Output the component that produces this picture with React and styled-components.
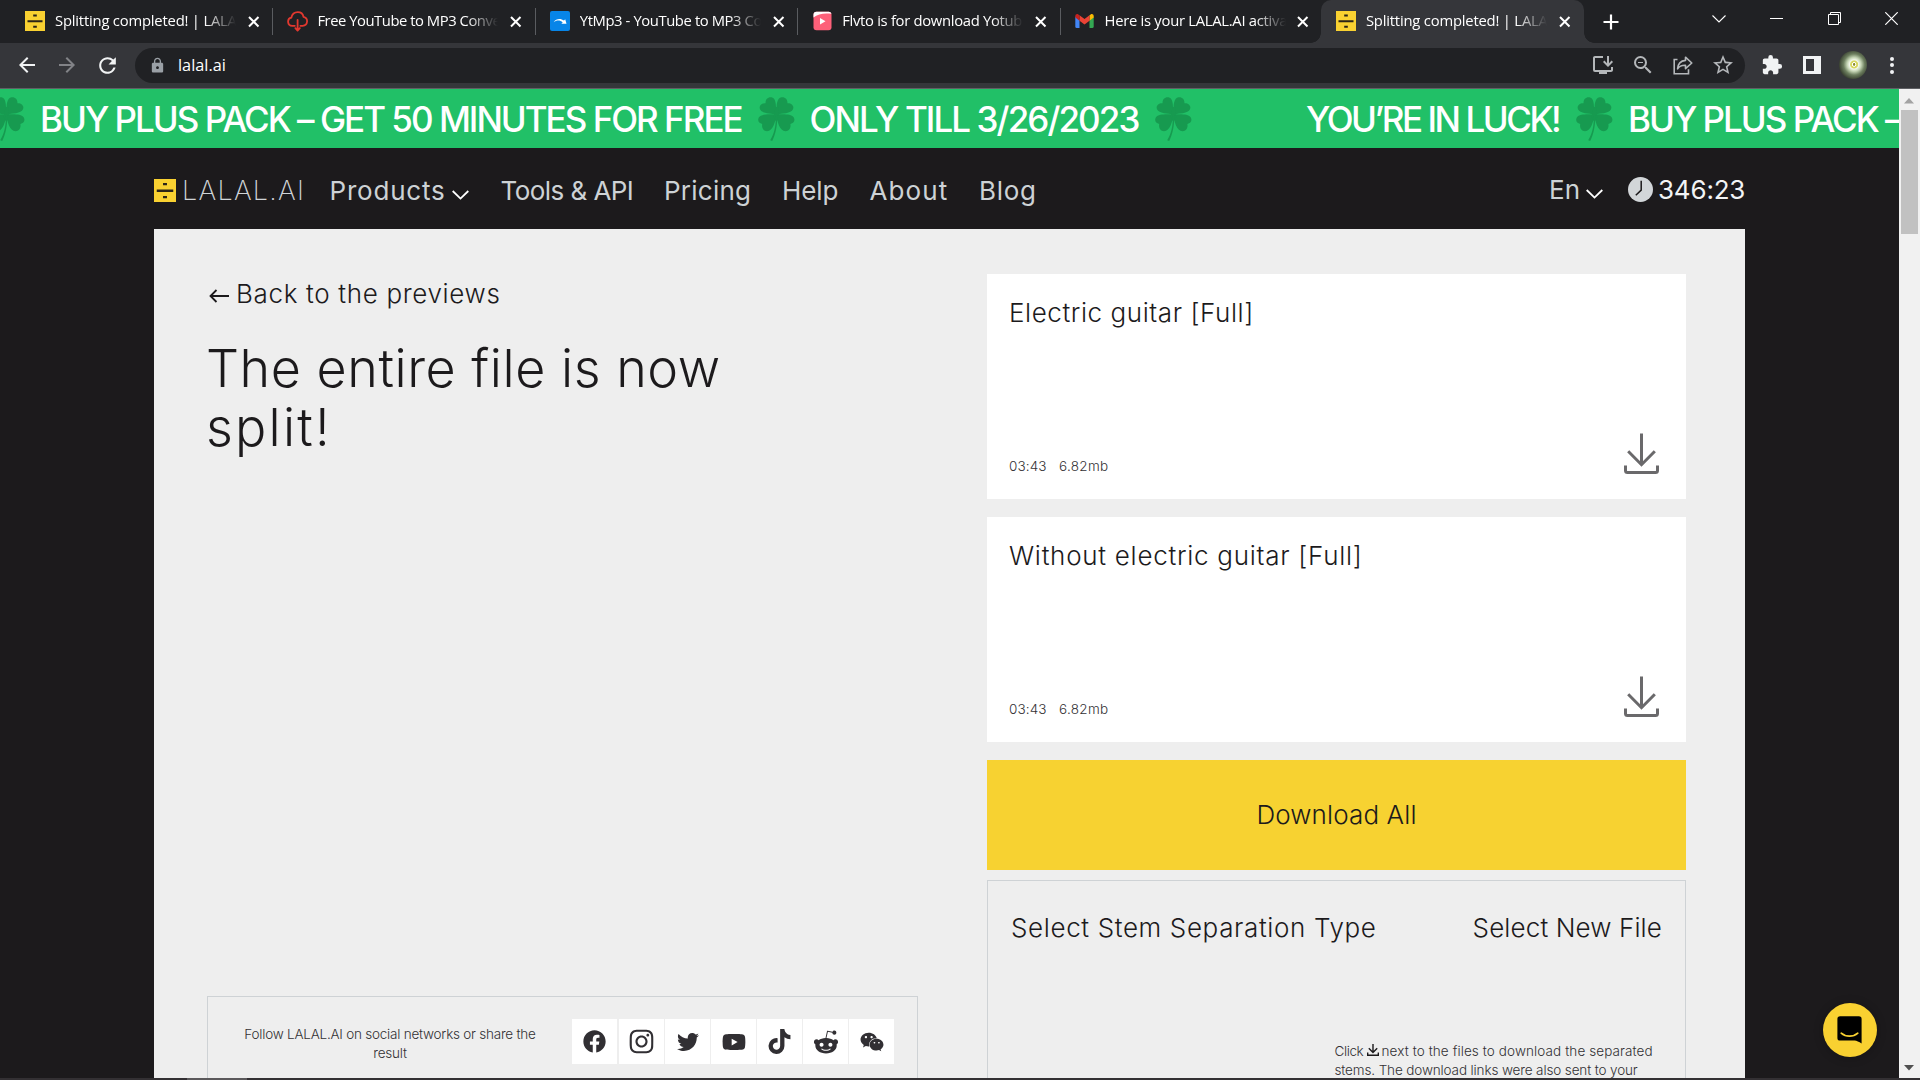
import React from "react";
import styled, { createGlobalStyle, css } from "styled-components";
import {
  MdArrowBack,
  MdArrowForward,
  MdRefresh,
  MdLock,
  MdZoomOut,
  MdStarBorder,
  MdExtension,
  MdInstallDesktop,
} from "react-icons/md";
import {
  FaFacebook,
  FaInstagram,
  FaTwitter,
  FaYoutube,
  FaTiktok,
  FaRedditAlien,
  FaWeixin,
} from "react-icons/fa";

const GlobalStyle = createGlobalStyle`
  * { box-sizing: border-box; }
  html, body { margin: 0; padding: 0; overflow: hidden; background: #1c1a1c; }
  body { font-family: Inter, "Liberation Sans", sans-serif; }
  svg { display: block; flex: none; }
`;

const Screen = styled.div`
  width: 1920px;
  height: 1080px;
  overflow: hidden;
  display: flex;
  flex-direction: column;
`;

/* ---------- browser chrome ---------- */

const TabStrip = styled.div`
  flex: none;
  height: 43px;
  display: flex;
  padding-left: 11px;
  background: #202124;
`;

const Tab = styled.div`
  position: relative;
  flex: none;
  width: 262.4px;
  height: 43px;
  display: flex;
  align-items: center;
  padding-left: 14px;
  ${(p) =>
    p.$active
      ? css`
          width: 263px;
          margin-left: -2px;
          padding-left: 15px;
          background: #35363a;
          border-radius: 10px 10px 0 0;
          &::before,
          &::after {
            content: "";
            position: absolute;
            bottom: 0;
            width: 10px;
            height: 10px;
          }
          &::before {
            left: -10px;
            background: radial-gradient(circle at 0 0, transparent 9.5px, #35363a 10px);
          }
          &::after {
            right: -10px;
            background: radial-gradient(circle at 100% 0, transparent 9.5px, #35363a 10px);
          }
        `
      : css`
          border-right: 1px solid ${p.$last ? "transparent" : "#5a5c60"};
          border-image: ${p.$last
            ? "none"
            : "linear-gradient(#202124 9px, #5a5c60 9px, #5a5c60 34px, #202124 34px) 1"};
          border-left: 0;
        `}
`;

const Favicon = styled.span`
  flex: none;
  width: 20px;
  height: 20px;
  margin-top: -1px;
  display: flex;
  align-items: center;
  justify-content: center;
`;

const TabTitle = styled.span`
  flex: none;
  width: 183px;
  margin-left: 10px;
  margin-top: -4px;
  overflow: hidden;
  white-space: nowrap;
  font: 400 14.8px/22px "Open Sans", "Noto Sans", sans-serif;
  letter-spacing: ${(p) => p.$ls}px;
  color: #fff;
  mask-image: linear-gradient(90deg, #000 150px, transparent 181px);
`;

const TabClose = styled.span`
  flex: none;
  width: 12px;
  margin-left: 9.8px;
`;

const NewTab = styled.span`
  width: 16px;
  margin-left: 19px;
  display: flex;
  align-items: center;
`;

const WindowControls = styled.div`
  flex: none;
  display: flex;
  margin-left: auto;
  height: 37px;
`;

const WindowButton = styled.span`
  width: 57.3px;
  display: flex;
  align-items: center;
  justify-content: center;
`;

const Toolbar = styled.div`
  flex: none;
  height: 46px;
  display: flex;
  align-items: center;
  padding: 0 15px 1px 15px;
  background: #35363a;
  border-bottom: 1px solid #5f6064;
  color: #f1f3f4;
`;

const NavButton = styled.span`
  flex: none;
  width: 24px;
  margin-right: 16px;
  color: ${(p) => (p.$dim ? "#828387" : "#f1f3f4")};
`;

const Omnibox = styled.div`
  flex: none;
  width: 1610px;
  height: 35px;
  padding: 0 10px 0 14px;
  border-radius: 18px;
  display: flex;
  align-items: center;
  background: #202124;
  color: #9aa0a6;
`;

const Address = styled.span`
  margin-left: 12px;
  font: 400 16.3px/24px "Open Sans", "Noto Sans", sans-serif;
  color: #fff;
`;

const OmniActions = styled.span`
  margin-left: auto;
  display: flex;
  align-items: center;
  gap: 16px;
  color: #b4b7ba;
  svg { width: 24px; height: 24px; }
`;

const ToolbarActions = styled.div`
  flex: 1;
  display: flex;
  align-items: center;
  padding-left: 16px;
`;

const PanelIcon = styled.span`
  width: 18px;
  height: 18px;
  margin-left: 20px;
  border: 3px solid #f1f3f4;
  border-right-width: 7px;
`;

const Avatar = styled.span`
  width: 28px;
  height: 28px;
  margin-left: 18px;
  border-radius: 50%;
  background: radial-gradient(circle at 54% 48%, #8a8a30 0 1px, #fff 1.5px 2px, #d8d860 2.5px 3.5px, #f4f8ec 4.5px, #c4d4b4 7px, #6d7f5f 10.5px, #3a4232 15px);
`;

const Dots = styled.span`
  display: flex;
  flex-direction: column;
  gap: 2.5px;
  margin-left: 23px;
  i {
    width: 4px;
    height: 4px;
    border-radius: 50%;
    background: #f1f3f4;
  }
`;

/* ---------- page ---------- */

const Viewport = styled.div`
  flex: none;
  height: 989px;
  display: flex;
  overflow: hidden;
`;

const Page = styled.div`
  flex: none;
  width: 1899px;
  height: 989px;
  overflow: hidden;
  background: #1c1a1c;
`;

const Banner = styled.div`
  height: 59px;
  display: flex;
  align-items: center;
  overflow: hidden;
  background: #21c067;
`;

const BannerTrack = styled.div`
  display: flex;
  align-items: center;
  margin-left: -12px;
  padding-top: 1px;
`;

const BannerText = styled.span`
  flex: none;
  width: ${(p) => p.$w}px;
  margin: ${(p) => p.$m || "0"};
  font: 450 35px/50px Inter, sans-serif;
  letter-spacing: ${(p) => p.$ls}px;
  white-space: nowrap;
  color: #fff;
`;

const Header = styled.header`
  height: 81px;
  margin: 0 154px;
  padding-top: 4px;
  display: flex;
  align-items: center;
`;

const BrandName = styled.span`
  flex: none;
  width: 147.5px;
  margin-left: 6px;
  font: 250 27px/32px Inter, sans-serif;
  letter-spacing: 1.25px;
  color: #d0d4d7;
`;

const NavItem = styled.a`
  flex: none;
  width: ${(p) => p.$w}px;
  display: flex;
  align-items: center;
  font: 400 26px/32px Inter, sans-serif;
  letter-spacing: ${(p) => p.$ls}px;
  white-space: nowrap;
  color: #cdd2d5;
  svg { margin: 8px 0 0 ${(p) => p.$gap || 6}px; }
`;

const HeaderRight = styled.div`
  margin-left: auto;
  display: flex;
  align-items: center;
  height: 30px;
  margin-top: -2px;
`;

const Balance = styled.span`
  width: 87px;
  margin-left: 5px;
  font: 430 26px/32px Inter, sans-serif;
  letter-spacing: -0.2px;
  white-space: nowrap;
  color: #f2f4f5;
`;

const Main = styled.main`
  width: 1591px;
  height: 860px;
  margin-left: 154px;
  display: flex;
  justify-content: space-between;
  padding: 0 59px 0 53px;
  background: #eeeeee;
  color: #1c1a1c;
`;

const LeftColumn = styled.section`
  width: 711px;
  height: 857px;
  padding-top: 50px;
  display: flex;
  flex-direction: column;
`;

const BackLink = styled.a`
  display: flex;
  align-items: center;
  gap: 7.5px;
  padding-left: 1.5px;
  font: 340 26px/30px Inter, sans-serif;
  letter-spacing: 0.66px;
  svg { margin-top: 3px; }
`;

const Heading = styled.h1`
  width: 600px;
  margin: 30px 0 0 -1px;
  font: 360 52px/59px Inter, sans-serif;
  letter-spacing: 0.54px;
`;

const Wide = styled.span`
  letter-spacing: 2.2px;
`;

const ShareBox = styled.div`
  height: 90px;
  margin-top: auto;
  padding: 22px 23px 0 0;
  display: flex;
  align-items: flex-start;
  border: 1px solid #ced2d5;
`;

const ShareText = styled.p`
  flex: 1;
  margin: 0;
  padding: 6px 34px 0;
  text-align: center;
  font: 300 13.5px/19px Inter, sans-serif;
  letter-spacing: -0.23px;
  color: #333134;
`;

const Socials = styled.div`
  display: flex;
  gap: 1px;
`;

const Social = styled.a`
  width: 45px;
  height: 45px;
  display: flex;
  align-items: center;
  justify-content: center;
  background: #fff;
  color: #312f33;
  &:first-child { margin-right: 1px; }
  svg { width: ${(p) => p.$s || 24}px; height: ${(p) => p.$s || 24}px; }
`;

const RightColumn = styled.section`
  width: 699px;
  padding-top: 45px;
`;

const StemCard = styled.article`
  height: 225px;
  margin-bottom: 18px;
  padding: 24px 27px 25px 22px;
  display: flex;
  flex-direction: column;
  justify-content: space-between;
  background: #fff;
`;

const StemTitle = styled.h2`
  margin: 0;
  font: 340 26px/30px Inter, sans-serif;
  letter-spacing: ${(p) => p.$ls}px;
`;

const StemFooter = styled.div`
  display: flex;
  align-items: flex-end;
  svg { margin-left: auto; }
`;

const Meta = styled.span`
  width: 50px;
  font: 300 13.5px/15px Inter, sans-serif;
  letter-spacing: ${(p) => p.$ls}px;
  color: #333134;
`;

const DownloadAll = styled.button`
  display: block;
  width: 100%;
  height: 110px;
  border: 0;
  padding: 0;
  background: #f7d231;
  font: 340 26px/30px Inter, sans-serif;
  letter-spacing: 0.12px;
  color: #1c1a1c;
`;

const SelectBox = styled.div`
  height: 240px;
  margin-top: 10px;
  padding: 32px 23px 0 23px;
  border: 1px solid #ced2d5;
`;

const SelectRow = styled.div`
  display: flex;
  justify-content: space-between;
  font: 340 26px/30px Inter, sans-serif;
`;

const SelectLabel = styled.span`
  letter-spacing: ${(p) => p.$ls}px;
`;

const Note = styled.p`
  width: 327.5px;
  margin: 99px 0 0 auto;
  font: 300 13.5px/19px Inter, sans-serif;
  color: #333134;
`;

const NoteLine = styled.span`
  display: flex;
  align-items: center;
  white-space: nowrap;
  letter-spacing: ${(p) => p.$ls}px;
  svg { margin: -3px 3px 0 3px; }
`;

const Tight = styled.span`
  width: 29px;
  letter-spacing: -0.4px;
`;

const Scrollbar = styled.div`
  width: 21px;
  display: flex;
  flex-direction: column;
  align-items: center;
  background: #f1f1f1;
  padding: 9px 1px 7px 0;
`;

const Thumb = styled.div`
  width: 17px;
  height: 124px;
  margin: 6px 0 auto;
  background: #c1c1c1;
`;

const ChatBubble = styled.div`
  position: absolute;
  left: 1823px;
  top: 1003px;
  width: 54px;
  height: 54px;
  border-radius: 50%;
  display: flex;
  align-items: center;
  justify-content: center;
  padding: 0 2px 1px 0;
  background: #f9d131;
  box-shadow: 0 1px 10px rgba(0, 0, 0, 0.25);
`;

const Taskbar = styled.div`
  flex: none;
  height: 2px;
  background: linear-gradient(90deg, #333033 187px, #5b595b 187px, #5b595b 247px, #333033 247px);
`;

/* ---------- drawings ---------- */

const DrawerIcon = ({ w, h }) => (
  <svg width={w} height={h} viewBox="0 0 20 20" preserveAspectRatio="none">
    <path fill="#f9d131" d="M0 0h20v20H0z" />
    <path fill="#2b2418" d="M2.5 9.2h15v2h-15zM8.2 3.4h3.6v2H8.2zM8.2 14.8h3.6v2H8.2z" />
  </svg>
);

const CloudIcon = () => (
  <svg width="21" height="21" viewBox="0 0 21 21" fill="none" stroke="#e2382f" strokeWidth="1.8" strokeLinecap="round" strokeLinejoin="round">
    <path d="M7.8 14.8H5.2a4.1 4.1 0 0 1-.9-8.1C5 3.6 7.6 1.2 10.8 1.2c3 0 5.2 2 5.7 4.7a4.5 4.5 0 0 1-.8 8.9h-2.3M10.6 8.8v10.5M8.4 17.2l2.2 2.4 2.2-2.4" />
  </svg>
);

const YtMp3Icon = () => (
  <svg width="20" height="20" viewBox="0 0 20 20">
    <rect width="20" height="20" rx="2" fill="#0785e8" />
    <path d="M3.6 11.2C6 7.6 10.5 6.8 14 9.6l1.2-1.3 1.3 4.5h-5.2l1.4-1.4C10 8.9 6.5 9 3.6 11.2z" fill="#fff" />
  </svg>
);

const FlvtoIcon = () => (
  <svg width="19" height="20" viewBox="0 0 19 20">
    <rect x="0.5" y="0.8" width="18" height="18.4" rx="3" fill="#fd6079" />
    <path d="M0.5 6.5V3.8a3 3 0 0 1 3-3h12a3 3 0 0 1 3 2C12 1.8 5 2.5.5 6.5z" fill="#fff" />
    <path d="M7 7l5.5 3.2L7 13.4z" fill="#fff" />
  </svg>
);

const GmailIcon = () => (
  <svg width="19" height="14" viewBox="0 0 19 14">
    <path fill="#4285f4" d="M.3 2.5v10.3c0 .7.5 1.2 1.2 1.2H4.5V5.6z" />
    <path fill="#34a853" d="M14.5 14h3c.7 0 1.2-.5 1.2-1.2V2.5l-4.2 3.1z" />
    <path fill="#fbbc04" d="M14.5 1.2v5.5l4.2-3.2V2c0-1.8-1.8-2.5-3-1.6z" />
    <path fill="#ea4335" d="M4.5 6.7V1.2l5 3.7 5-3.7v5.5l-5 3.8z" />
    <path fill="#c5221f" d="M.3 2v1.5l4.2 3.2V1.2L3.3.4C2.1-.5.3.2.3 2z" />
  </svg>
);

const Cross = () => (
  <svg width="12" height="12" viewBox="0 0 12 12" stroke="#fff" strokeWidth="2">
    <path d="M1 1l9.5 9.5M10.5 1L1 10.5" />
  </svg>
);

const Clover = () => (
  <svg width="37" height="44" viewBox="0 0 37 44" fill="#179a50">
    <path d="M18.5 17.5C17.5 11 19.2 1.2 13.5.2 9.5-.3 7.2 2.8 7.6 6.2 3.6 5.8.6 8.8 2 12.3 4 16.8 13 16.5 18.5 17.5z" />
    <path d="M18.5 17.5C18.5 11 17.8 1.2 23.5.2c4-.5 6.3 2.6 5.9 6 4-.4 7 2.6 5.6 6.1C33 16.8 24 16.5 18.5 17.5z" />
    <path d="M18.5 17.5C13 17.3 3.5 16.5.8 20.5-.8 23.5.8 26.2 4.2 27 3.5 31 5.5 34 9 34.2c6 0 8.5-9.7 9.5-16.7z" />
    <path d="M18.5 17.5c5.5-.2 14.5-1 17.3 3 1.6 3 0 5.7-3.4 6.5.7 4-1.3 7-4.8 7.2-6 0-8.6-9.7-9.1-16.7z" />
    <path d="M17.6 10h2.5l1 10-2 4h-1.5l-2-4z" />
    <path d="M17.8 18C18.2 29 16 37 12.2 43.3l2 .7C17.5 37.5 19.5 29 19.3 18z" />
  </svg>
);

const Chevron = () => (
  <svg width="17" height="10" viewBox="0 0 17 10" fill="none" stroke="#fff" strokeWidth="1.8">
    <path d="M.7 1l7.8 7.6L16.3 1" />
  </svg>
);

const ClockIcon = () => (
  <svg width="25" height="25" viewBox="0 0 25 25">
    <circle cx="12.5" cy="12.5" r="12.5" fill="#d2d6d9" />
    <path d="M13.2 3.8v9.3l-5.4 5.2" fill="none" stroke="#1c1a1c" strokeWidth="1.5" />
  </svg>
);

const BackArrow = () => (
  <svg width="20" height="14" viewBox="0 0 20 14" fill="none" stroke="#1c1a1c" strokeWidth="1.8">
    <path d="M20 7H1.5M7.5 1l-6 6 6 6" />
  </svg>
);

const DownloadIcon = () => (
  <svg width="35" height="41" viewBox="0 0 35 41" fill="none" stroke="#6a696b" strokeWidth="3">
    <path d="M17.5.5v31M4.2 18.3l13.3 13.4 13.3-13.4M1.5 32.5v5q0 2 2 2h28q2 0 2-2v-5" />
  </svg>
);

const MiniDownload = () => (
  <svg width="12" height="12" viewBox="0 0 12 12" fill="none" stroke="#1c1a1c" strokeWidth="1.4">
    <path d="M6 0v8.3M1.8 4.2L6 8.4l4.2-4.2M.7 8.5v2.8h10.6V8.5" />
  </svg>
);

const ShareIcon = () => (
  <svg viewBox="0 0 24 24" fill="none" stroke="currentColor" strokeWidth="1.6">
    <path d="M6.5 6.5H3.2v14.3h14.3v-4.5" />
    <path strokeLinejoin="round" d="M14.5 4.2l6.3 5.8-6.3 5.6v-3.3c-3.7-.1-6.3 1-7.9 3.6.3-4.8 3.2-8.1 7.9-8.5z" />
  </svg>
);

const ChatIcon = () => (
  <svg width="25" height="28" viewBox="0 0 25 28">
    <path d="M3 .3h19a2.6 2.6 0 0 1 2.6 2.6V27.6c-2.6-1.8-5-2.800-7-3H3A2.6 2.6 0 0 1 .4 22V2.9A2.6 2.6 0 0 1 3 .3z" fill="#000" />
    <path d="M4.2 17.2c4.6 4 12 4 16.6 0" fill="none" stroke="#f9d131" strokeWidth="1.7" strokeLinecap="round" />
  </svg>
);

const Arrow = ({ up }) => (
  <svg width="10" height="6" viewBox="0 0 10 6">
    <path d={up ? "M5 0l5 5.5H0z" : "M5 5.5L10 0H0z"} fill={up ? "#a3a3a3" : "#505050"} />
  </svg>
);

/* ---------- data ---------- */

const TABS = [
  { title: "Splitting completed! | LALAL", icon: <DrawerIcon w={20} h={20} />, ls: -0.2 },
  { title: "Free YouTube to MP3 Conver", icon: <CloudIcon />, ls: -0.46 },
  { title: "YtMp3 - YouTube to MP3 Co", icon: <YtMp3Icon />, ls: -0.4 },
  { title: "Flvto is for download Yotube", icon: <FlvtoIcon />, ls: -0.3 },
  { title: "Here is your LALAL.AI activat", icon: <GmailIcon />, ls: -0.28 },
  { title: "Splitting completed! | LALAL", icon: <DrawerIcon w={20} h={20} />, ls: -0.2 },
];

const NAV = [
  { label: "Tools & API", w: 163.5, ls: -0.55 },
  { label: "Pricing", w: 118, ls: 0.25 },
  { label: "Help", w: 87.5, ls: -0.1 },
  { label: "About", w: 109.5, ls: 1.1 },
  { label: "Blog", w: 60, ls: 0.7 },
];

const SOCIALS = [
  [FaFacebook, 23],
  [FaInstagram, 27],
  [FaTwitter, 22],
  [FaYoutube, 24],
  [FaTiktok, 25],
  [FaRedditAlien, 26],
  [FaWeixin, 24],
];

const STEMS = [
  { title: "Electric guitar [Full]", ls: 0.57 },
  { title: "Without electric guitar [Full]", ls: 0.72 },
];

export default function App() {
  return (
    <Screen>
      <GlobalStyle />
      <TabStrip>
        {TABS.map((t, i) => (
          <Tab key={i} $active={i === 5} $last={i === 4}>
            <Favicon>{t.icon}</Favicon>
            <TabTitle $ls={t.ls}>{t.title}</TabTitle>
            <TabClose>
              <Cross />
            </TabClose>
          </Tab>
        ))}
        <NewTab>
          <svg width="16" height="16" viewBox="0 0 16 16" stroke="#fff" strokeWidth="2.2">
            <path d="M8 .5v15M.5 8h15" />
          </svg>
        </NewTab>
        <WindowControls>
          <WindowButton>
            <svg width="14" height="8" viewBox="0 0 14 8" fill="none" stroke="#fff" strokeWidth="1.1">
              <path d="M.5.5L7 7 13.5.5" />
            </svg>
          </WindowButton>
          <WindowButton>
            <svg width="13" height="1" viewBox="0 0 13 1">
              <path d="M0 0h13v1H0z" fill="#fff" />
            </svg>
          </WindowButton>
          <WindowButton>
            <svg width="13" height="13" viewBox="0 0 13 13" fill="none" stroke="#fff">
              <path d="M.5 2.5h10v10H.5zM2.5 2.5v-2h10v10h-2" />
            </svg>
          </WindowButton>
          <WindowButton>
            <svg width="13" height="13" viewBox="0 0 13 13" stroke="#fff" strokeWidth="1.2">
              <path d="M.3.3l12.4 12.4M12.7.3L.3 12.7" />
            </svg>
          </WindowButton>
        </WindowControls>
      </TabStrip>

      <Toolbar>
        <NavButton>
          <MdArrowBack size={24} />
        </NavButton>
        <NavButton $dim>
          <MdArrowForward size={24} />
        </NavButton>
        <NavButton>
          <MdRefresh size={25} />
        </NavButton>
        <Omnibox>
          <MdLock size={17} />
          <Address>lalal.ai</Address>
          <OmniActions>
            <MdInstallDesktop />
            <MdZoomOut />
            <ShareIcon />
            <MdStarBorder />
          </OmniActions>
        </Omnibox>
        <ToolbarActions>
          <MdExtension size={22} />
          <PanelIcon />
          <Avatar />
          <Dots>
            <i />
            <i />
            <i />
          </Dots>
        </ToolbarActions>
      </Toolbar>

      <Viewport>
        <Page>
          <Banner>
            <BannerTrack>
              <Clover />
              <BannerText $w={701} $m="0 17px 0 15px" $ls={-2}>
                BUY PLUS PACK – GET 50 MINUTES FOR FREE
              </BannerText>
              <Clover />
              <BannerText $w={330.5} $m="0 15px 0 14.5px" $ls={-1.92}>
                ONLY TILL 3/26/2023
              </BannerText>
              <Clover />
              <BannerText $w={255} $m="0 15px 0 114px" $ls={-2.45}>
                YOU’RE IN LUCK!
              </BannerText>
              <Clover />
              <BannerText $w={400} $m="0 0 0 15px" $ls={-2}>
                BUY PLUS PACK – GET 50
              </BannerText>
            </BannerTrack>
          </Banner>

          <Header>
            <DrawerIcon w={22} h={23} />
            <BrandName>LALAL.AI</BrandName>
            <NavItem $w={171} $ls={0.8}>
              Products
              <Chevron />
            </NavItem>
            {NAV.map((n) => (
              <NavItem key={n.label} $w={n.w} $ls={n.ls}>
                {n.label}
              </NavItem>
            ))}
            <HeaderRight>
              <NavItem $w={79} $ls={0.1} $gap={6}>
                En
                <Chevron />
              </NavItem>
              <ClockIcon />
              <Balance>346:23</Balance>
            </HeaderRight>
          </Header>

          <Main>
            <LeftColumn>
              <BackLink>
                <BackArrow />
                Back to the previews
              </BackLink>
              <Heading>
                The entire file is now <Wide>split!</Wide>
              </Heading>
              <ShareBox>
                <ShareText>Follow LALAL.AI on social networks or share the result</ShareText>
                <Socials>
                  {SOCIALS.map(([Icon, s], i) => (
                    <Social key={i} $s={s}>
                      <Icon />
                    </Social>
                  ))}
                </Socials>
              </ShareBox>
            </LeftColumn>

            <RightColumn>
              {STEMS.map((s) => (
                <StemCard key={s.title}>
                  <StemTitle $ls={s.ls}>{s.title}</StemTitle>
                  <StemFooter>
                    <Meta $ls={0.1}>03:43</Meta>
                    <Meta $ls={0.3}>6.82mb</Meta>
                    <DownloadIcon />
                  </StemFooter>
                </StemCard>
              ))}
              <DownloadAll>Download All</DownloadAll>
              <SelectBox>
                <SelectRow>
                  <SelectLabel $ls={0.63}>Select Stem Separation Type</SelectLabel>
                  <SelectLabel $ls={0.12}>Select New File</SelectLabel>
                </SelectRow>
                <Note>
                  <NoteLine $ls={0.1}>
                    <Tight>Click</Tight>
                    <MiniDownload />
                    <span>next to the files to download the separated</span>
                  </NoteLine>
                  <NoteLine $ls={-0.13}>stems. The download links were also sent to your</NoteLine>
                </Note>
              </SelectBox>
            </RightColumn>
          </Main>
        </Page>
        <Scrollbar>
          <Arrow up />
          <Thumb />
          <Arrow />
        </Scrollbar>
      </Viewport>
      <Taskbar />
      <ChatBubble>
        <ChatIcon />
      </ChatBubble>
    </Screen>
  );
}
